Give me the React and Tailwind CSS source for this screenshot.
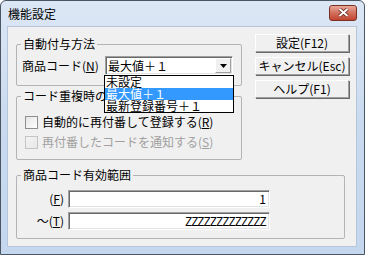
import React from 'react';

const sunken =
    'border border-t-[#a0a0a0] border-l-[#a0a0a0] border-b-white border-r-white bg-white shadow-[inset_1px_1px_0_#696969,inset_-1px_-1px_0_#e3e3e3]';
const raised =
    'border border-t-white border-l-white border-b-[#a0a0a0] border-r-[#a0a0a0] bg-[#f0f0f0] shadow-[1px_1px_0_#696969]';

function U({ c }) {
    return <span className="underline underline-offset-[1px]">{c}</span>;
}

function Group({ title, className, children }) {
    return (
        <fieldset className={'border border-[#b4b4b4] rounded-[2px] ' + className}>
            <legend className="ml-[4px] px-[2px] text-[12px] leading-[12px]">{title}</legend>
            {children}
        </fieldset>
    );
}

function Check({ label, disabled }) {
    return (
        <div className="flex items-center h-[14px] gap-[4px]">
            <span
                className={
                    'w-[13px] h-[13px] border bg-gradient-to-br ' +
                    (disabled
                        ? 'border-[#c4c4c4] from-[#f4f4f4] to-[#e8e8e8]'
                        : 'border-[#8e8f8f] from-[#e6e6e6] to-white')
                }
            />
            <span className={'text-[12px] leading-[14px] ' + (disabled ? 'text-[#a0a0a0]' : 'text-black')}>
                {label}
            </span>
        </div>
    );
}

function Btn({ children }) {
    return (
        <button className={'w-[94px] h-[18px] text-[12px] leading-none text-black ' + raised}>{children}</button>
    );
}

export default function App() {
    return (
        <div className="w-[365px] h-[255px] font-['Noto_Sans_CJK_JP','Noto_Sans',sans-serif] text-black">
            <div className="w-full h-full flex flex-col border border-[#4a5563] rounded-t-[6px] bg-gradient-to-b from-[#dce7f5] via-[#c9daef] to-[#c4d7ee]">
                {/* title bar */}
                <div className="h-[25px] flex items-center justify-between pl-[7px] pr-[7px]">
                    <span className="text-[12px] leading-none pt-[1px]">機能設定</span>
                    <div className="w-[28px] h-[16px] mt-[-2px] rounded-[3px] border border-[#7a2f22] bg-gradient-to-b from-[#e8a798] via-[#d16f5c] to-[#c2432f] flex items-center justify-center">
                        <svg width="11" height="9" viewBox="0 0 11 9">
                            <path d="M1.5 1 L9.5 8 M9.5 1 L1.5 8" stroke="#5a1a10" strokeWidth="3.4" />
                            <path d="M1.5 1 L9.5 8 M9.5 1 L1.5 8" stroke="#fff" strokeWidth="2" />
                        </svg>
                    </div>
                </div>

                {/* client */}
                <div className="ml-[6px] w-[350px] h-[221px] bg-[#f0f0f0] border border-[#b5c6da] pl-[8px] pt-[7px]">
                    <div className="flex">
                        <div className="w-[226px] pt-[4px]">
                            <Group title="自動付与方法">
                                <div className="flex items-center pl-[5px] mt-[6px] pb-[10px]">
                                    <span className="w-[83px] text-[12px] leading-none">
                                        商品コード(<U c="N" />)
                                    </span>
                                    <div className={'relative w-[128px] h-[19px] flex items-center ' + sunken}>
                                        <span className="flex-1 pl-[2px] text-[12px] leading-none">最大値＋１</span>
                                        <div className={'w-[16px] h-[15px] mr-[1px] flex items-center justify-center ' + raised.replace('shadow-[1px_1px_0_#696969]', '')}>
                                            <svg width="7" height="4" viewBox="0 0 7 4">
                                                <path d="M0 0 H7 L3.5 4 Z" fill="#000" />
                                            </svg>
                                        </div>
                                        <div className="absolute left-[-2px] top-[18px] w-[130px] bg-white border border-black z-10 text-[12px] leading-[12px]">
                                            <div className="h-[12px] pl-[1px]">未設定</div>
                                            <div className="h-[12px] pl-[1px] bg-[#3399ff] text-white">最大値＋１</div>
                                            <div className="h-[12px] pl-[1px]">最新登録番号＋１</div>
                                        </div>
                                    </div>
                                </div>
                            </Group>
                            <Group title="コード重複時の処理" className="mt-[4px]">
                                <div className="pl-[8px] mt-[13px] pb-[10px] flex flex-col gap-[6px]">
                                    <Check label={<>自動的に再付番して登録する(<U c="R" />)</>} />
                                    <Check disabled label={<>再付番したコードを通知する(<U c="S" />)</>} />
                                </div>
                            </Group>
                        </div>
                        <div className="ml-[13px] flex flex-col gap-[5px]">
                            <Btn>設定(F12)</Btn>
                            <Btn>キャンセル(Esc)</Btn>
                            <Btn>ヘルプ(F1)</Btn>
                        </div>
                    </div>

                    <Group title="商品コード有効範囲" className="mt-[9px] w-[329px]">
                        <div className="mt-[9px] pb-[8px] flex flex-col gap-[4px]">
                            <div className="flex items-center">
                                <span className="w-[47px] text-right text-[12px] leading-none">
                                    (<U c="F" />)
                                </span>
                                <div className={'ml-[4px] w-[202px] h-[18px] flex items-center justify-end pr-[3px] text-[12px] leading-none ' + sunken}>
                                    1
                                </div>
                            </div>
                            <div className="flex items-center">
                                <span className="w-[47px] text-right text-[12px] leading-none">
                                    ～(<U c="T" />)
                                </span>
                                <div className={'ml-[4px] w-[202px] h-[18px] flex items-center justify-end pr-[3px] text-[12px] leading-none tracking-[-0.8px] ' + sunken}>
                                    ZZZZZZZZZZZZZ
                                </div>
                            </div>
                        </div>
                    </Group>
                </div>
            </div>
        </div>
    );
}
